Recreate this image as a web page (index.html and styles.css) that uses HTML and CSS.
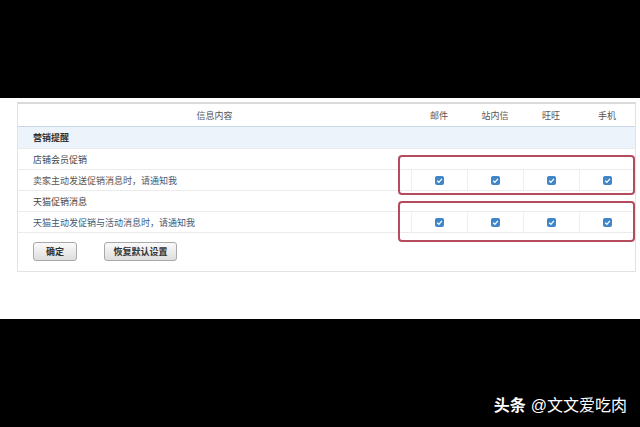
FILE: index.html
```html
<!DOCTYPE html>
<html lang="zh-CN">
<head>
  <meta charset="UTF-8" />
  <meta name="viewport" content="width=device-width, initial-scale=1.0" />
  <title>消息订阅设置</title>
  <link rel="stylesheet" href="styles.css">
</head>
<body>
  <div class="shot">
    <div class="sheet">
      <div class="panel">
        <table class="subs">
          <colgroup>
            <col class="col-info">
            <col class="col-way">
            <col class="col-way">
            <col class="col-way">
            <col class="col-way">
          </colgroup>
          <thead>
            <tr>
              <th class="info-head">信息内容</th>
              <th>邮件</th>
              <th>站内信</th>
              <th>旺旺</th>
              <th>手机</th>
            </tr>
          </thead>
          <tbody>
            <tr class="section">
              <td colspan="5">营销提醒</td>
            </tr>
            <tr>
              <td colspan="5" class="item">店铺会员促销</td>
            </tr>
            <tr class="opts">
              <td class="desc">卖家主动发送促销消息时，<span class="ask">请通知我</span></td>
              <td><span class="check"><svg viewBox="0 0 9 9" width="9" height="9"><rect width="9" height="9" rx="2" fill="#3f86c8"/><path d="M2.2 4.7 L3.9 6.3 L6.9 2.8" fill="none" stroke="#fff" stroke-width="1.3"/></svg></span></td>
              <td><span class="check"><svg viewBox="0 0 9 9" width="9" height="9"><rect width="9" height="9" rx="2" fill="#3f86c8"/><path d="M2.2 4.7 L3.9 6.3 L6.9 2.8" fill="none" stroke="#fff" stroke-width="1.3"/></svg></span></td>
              <td><span class="check"><svg viewBox="0 0 9 9" width="9" height="9"><rect width="9" height="9" rx="2" fill="#3f86c8"/><path d="M2.2 4.7 L3.9 6.3 L6.9 2.8" fill="none" stroke="#fff" stroke-width="1.3"/></svg></span></td>
              <td><span class="check"><svg viewBox="0 0 9 9" width="9" height="9"><rect width="9" height="9" rx="2" fill="#3f86c8"/><path d="M2.2 4.7 L3.9 6.3 L6.9 2.8" fill="none" stroke="#fff" stroke-width="1.3"/></svg></span></td>
            </tr>
            <tr>
              <td colspan="5" class="item">天猫促销消息</td>
            </tr>
            <tr class="opts">
              <td class="desc ask">天猫主动发促销与活动消息时，请通知我</td>
              <td><span class="check"><svg viewBox="0 0 9 9" width="9" height="9"><rect width="9" height="9" rx="2" fill="#3f86c8"/><path d="M2.2 4.7 L3.9 6.3 L6.9 2.8" fill="none" stroke="#fff" stroke-width="1.3"/></svg></span></td>
              <td><span class="check"><svg viewBox="0 0 9 9" width="9" height="9"><rect width="9" height="9" rx="2" fill="#3f86c8"/><path d="M2.2 4.7 L3.9 6.3 L6.9 2.8" fill="none" stroke="#fff" stroke-width="1.3"/></svg></span></td>
              <td><span class="check"><svg viewBox="0 0 9 9" width="9" height="9"><rect width="9" height="9" rx="2" fill="#3f86c8"/><path d="M2.2 4.7 L3.9 6.3 L6.9 2.8" fill="none" stroke="#fff" stroke-width="1.3"/></svg></span></td>
              <td><span class="check"><svg viewBox="0 0 9 9" width="9" height="9"><rect width="9" height="9" rx="2" fill="#3f86c8"/><path d="M2.2 4.7 L3.9 6.3 L6.9 2.8" fill="none" stroke="#fff" stroke-width="1.3"/></svg></span></td>
            </tr>
          </tbody>
        </table>

        <div class="actions">
          <button class="btn btn-ok">确定</button>
          <button class="btn btn-reset">恢复默认设置</button>
        </div>

        <!-- marcações em vermelho por cima da tabela -->
        <div class="mark mark-shop"></div>
        <div class="mark mark-tmall"></div>
      </div>
    </div>

    <div class="footer">
      <span class="brand">头条</span>
      <span class="author">@文文爱吃肉</span>
    </div>
  </div>
</body>
</html>
```

FILE: styles.css
```css
body {
  margin: 0;
  padding: 0;
  background: #000;
  font-family: "Liberation Sans", "Noto Sans CJK SC", sans-serif;
}
.shot {
  width: 640px;
  height: 427px;
  padding-top: 98px;
  box-sizing: border-box;
  overflow: hidden;
}
.sheet {
  height: 221px;
  background: #fff;
  padding: 4px 4px 0 17px;
  box-sizing: border-box;
}
.panel {
  position: relative;
  border: 1px solid #e2e2e2;
  border-top: 2px solid #d9d9d9;
  padding-bottom: 10px;
}
.subs {
  width: 100%;
  border-collapse: collapse;
  table-layout: fixed;
  font-size: 9px;
  color: #444;
}
.col-info {
  width: 393px;
}
.col-way {
  width: 56px;
}
.subs th {
  height: 22px;
  padding: 0;
  font-weight: normal;
  color: #555;
  text-align: center;
  border-bottom: 1px solid #c9d6e5;
}
.subs td {
  height: 20px;
  padding: 0;
  border-bottom: 1px solid #ebebeb;
}
.section td {
  height: 21px;
  padding-left: 15px;
  background: #edf3fa;
  font-weight: bold;
  color: #333;
}
.item,
.desc {
  padding-left: 15px !important;
}
.desc {
  color: #5a5550;
}
.ask {
  color: #3e5a78;
}
.opts td + td {
  text-align: center;
  border-left: 1px solid #efefef;
}
.check {
  display: inline-block;
  width: 9px;
  height: 9px;
  vertical-align: middle;
}
.check svg {
  display: block;
}
.actions {
  display: flex;
  gap: 27px;
  padding: 9px 0 0 15px;
}
.btn {
  height: 19px;
  padding: 0;
  font-family: inherit;
  font-size: 9px;
  font-weight: bold;
  color: #333;
  border: 1px solid #a9a9a9;
  border-radius: 3px;
  background: linear-gradient(#fafafa, #dedede);
}
.btn-ok {
  width: 44px;
}
.btn-reset {
  width: 73px;
}
.mark {
  position: absolute;
  left: 380px;
  width: 237px;
  border: 2px solid #b54c5e;
  border-radius: 4px;
  box-sizing: border-box;
}
.mark-shop {
  top: 51px;
  height: 40px;
}
.mark-tmall {
  top: 97px;
  height: 41px;
}
.footer {
  display: flex;
  justify-content: flex-end;
  align-items: center;
  gap: 5px;
  padding: 73px 13px 0 0;
  font-size: 16px;
  color: #fff;
}
.brand {
  font-weight: bold;
}
```
